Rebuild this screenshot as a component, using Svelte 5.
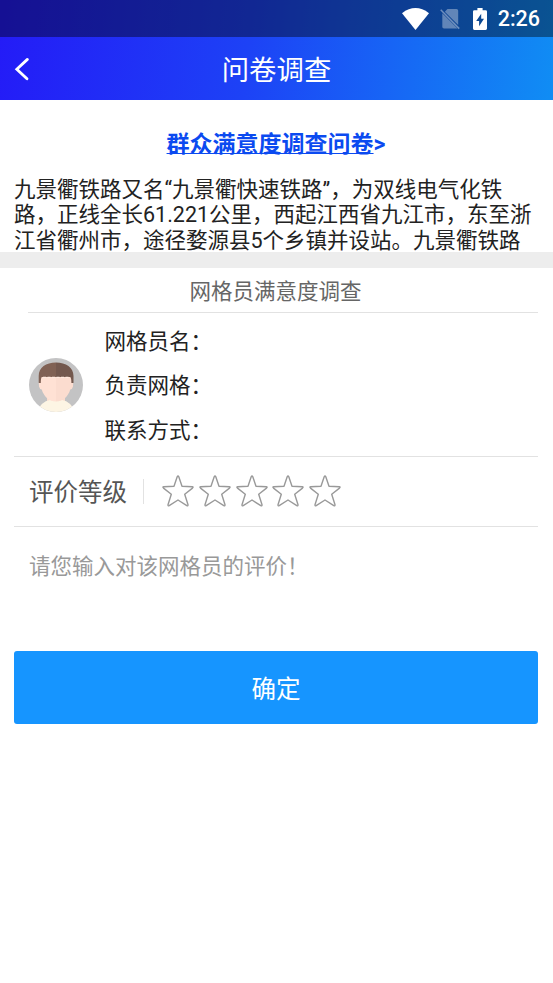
<script lang="ts">
  const fields = ["网格员名：", "负责网格：", "联系方式："];
  const stars = [1, 2, 3, 4, 5];

  let rating = $state(0);
  let comment = $state("");
</script>

<div class="screen" lang="zh-CN">
  <header class="top">
    <div class="status">
      <svg class="wifi" width="27" height="22" viewBox="0 0 27 22">
        <path d="M0 5.2Q13.5-5 27 5.2L13.5 22Z" fill="#fff" />
      </svg>
      <svg class="sim" width="20" height="22" viewBox="0 0 20 22">
        <g fill="#fff" opacity="0.35">
          <path d="M7.5 1H16.5Q18.2 1 18.2 2.7V17L4.8 3.8Z" />
          <path d="M2.3 5.3L17.5 20.5H4Q2.3 20.5 2.3 18.8Z" />
        </g>
        <path d="M.7 1.8L19.2 20.6" stroke="#fff" stroke-width="1.5" opacity="0.4" />
      </svg>
      <svg class="battery" width="14" height="22" viewBox="0 0 14 23" preserveAspectRatio="none">
        <path
          fill="#fff"
          fill-rule="evenodd"
          d="M4.4 0H9.6V2.3H12.6Q14 2.3 14 3.7V21.5Q14 23 12.6 23H1.4Q0 23 0 21.5V3.7Q0 2.3 1.4 2.3H4.4ZM8.2 6L3.2 13.6H6.1V19L11 11.3H8.2Z"
        />
      </svg>
      <span class="clock">2:26</span>
    </div>
    <div class="navbar">
      <button class="back" type="button" aria-label="返回">
        <svg width="16" height="24" viewBox="0 0 16 24">
          <path d="M13.4 2.4L2.8 12.2L13 21.8" fill="none" stroke="#fff" stroke-width="2.8" stroke-linecap="round" />
        </svg>
      </button>
      <h1>问卷调查</h1>
    </div>
  </header>

  <section class="intro">
    <a class="survey-link" href="#survey"><span>群众满意度调查问卷</span>&gt;</a>
    <p>
      九景衢铁路又名“九景衢快速铁路”，为双线电气化铁路，正线全长61.221公里，西起江西省九江市，东至浙江省衢州市，途径婺源县5个乡镇并设站。九景衢铁路
    </p>
  </section>

  <section class="survey">
    <h2>网格员满意度调查</h2>

    <div class="member">
      <svg class="avatar" width="54" height="54" viewBox="0 0 54 54">
        <clipPath id="avatar-clip"><circle cx="27" cy="27" r="27" /></clipPath>
        <g clip-path="url(#avatar-clip)">
          <rect width="54" height="54" fill="#c3c3c4" />
          <path d="M18 34H36V46H18Z" fill="#fbdccd" />
          <path d="M8 54Q12 43.500 21 42Q27 44 33 42Q42 43.500 46 54Z" fill="#fdf5e4" />
          <path d="M11 17H27V43.500C20 43.500 14.500 38 12.800 31.500Q10.500 31 10 28.500L9.800 24.500Z" fill="#ffe1d4" />
          <path d="M43 17H27V43.500C34 43.500 39.500 38 41.200 31.500Q43.500 31 44 28.500L44.200 24.500Z" fill="#fbdccf" />
          <path d="M9.700 25V18C9.700 9.500 17 4.500 27 4.500V19H12.800Q11.800 20 11.800 25Z" fill="#806154" />
          <path d="M27 4.500C37 4.500 44.500 9.500 44.500 18V25H42.400Q42.400 20 41.200 19H27Z" fill="#73584e" />
          <path d="M14 19.300H40.500" stroke="#ffe9df" stroke-width="1.300" stroke-dasharray="3 1.500" />
        </g>
      </svg>
      <ul>
        {#each fields as field}
          <li>{field}</li>
        {/each}
      </ul>
    </div>

    <div class="rating">
      <span class="rating-label">评价等级</span>
      <div class="stars">
        {#each stars as value}
          <button
            class="star"
            class:selected={value <= rating}
            type="button"
            aria-label={`${value}星`}
            onclick={() => (rating = value)}
          >
            <svg width="32" height="32" viewBox="0 0 32 32">
              <path
                d="M15.200 1.800Q16 .3 16.800 1.800L20 11.200L30.300 11.800Q31.700 12 30.500 13.100L22.700 19.300L26 29.700Q26.200 31.400 24.800 30.700L16 25L7.200 30.700Q5.800 31.400 6 29.700L9.300 19.300L1.500 13.100Q.3 12 1.700 11.800L12 11.200Z"
              />
            </svg>
          </button>
        {/each}
      </div>
    </div>

    <textarea bind:value={comment} placeholder="请您输入对该网格员的评价！"></textarea>
    <button class="submit" type="button">确定</button>
  </section>
</div>

<style>
  :global(body) {
    background: #fff;
  }

  .screen {
    min-height: 983px;
    font-family: Roboto, "Noto Sans CJK SC", sans-serif;
    font-size: 21.5px;
    color: #222;
    background: #fff;
  }

  h1,
  h2,
  p,
  ul {
    margin: 0;
    padding: 0;
    font-weight: 400;
  }

  button {
    padding: 0;
    border: none;
    background: none;
    font: inherit;
    cursor: pointer;
  }

  svg {
    display: block;
  }

  .top {
    height: 100px;
    color: #fff;
    background: linear-gradient(97deg, #241bf7, #1d42f6 45%, #108df4);
  }

  .status {
    display: flex;
    align-items: center;
    justify-content: flex-end;
    box-sizing: border-box;
    height: 37px;
    padding-right: 13px;
    background: rgba(0, 0, 0, 0.4);
  }

  .sim {
    margin-left: 11px;
  }

  .battery {
    margin-left: 13px;
  }

  .clock {
    margin-left: 11px;
    font-size: 21.5px;
    font-weight: 500;
    line-height: 39px;
  }

  .navbar {
    display: grid;
    grid-template-columns: 60px 1fr 60px;
    align-items: center;
    height: 63px;
  }

  .back {
    padding-left: 14px;
  }

  h1 {
    padding-top: 5px;
    font-size: 27.4px;
    line-height: 58px;
    text-align: center;
  }

  .intro {
    box-sizing: border-box;
    height: 168px;
    padding: 27px 15px 0 14px;
    border-bottom: 16px solid #ededed;
  }

  .survey-link {
    display: block;
    font-size: 23px;
    font-weight: 700;
    line-height: 36px;
    color: #0b4af0;
    text-align: center;
    text-decoration: none;
  }

  .survey-link span {
    text-decoration: underline;
    text-decoration-thickness: 1px;
    text-underline-offset: 1px;
  }

  .intro p {
    height: 75px;
    margin-top: 14px;
    line-height: 25.3px;
    overflow: hidden;
  }

  .survey {
    padding: 0 15px 0 14px;
  }

  h2 {
    margin-left: 14px;
    padding: 3px 15px 0 0;
    border-bottom: 1px solid #e2e2e2;
    font-size: 21.5px;
    line-height: 41px;
    color: #666;
    text-align: center;
  }

  .member {
    display: flex;
    align-items: center;
    box-sizing: border-box;
    height: 144px;
    padding-left: 15px;
    border-bottom: 1px solid #e2e2e2;
  }

  ul {
    margin-left: 21.5px;
    padding-top: 4px;
    list-style: none;
  }

  li {
    line-height: 44.6px;
  }

  .rating {
    display: flex;
    align-items: center;
    box-sizing: border-box;
    height: 70px;
    padding-left: 15px;
    border-bottom: 1px solid #e2e2e2;
  }

  .rating-label {
    padding: 2px 16px 0 0;
    border-right: 1px solid #e2e2e2;
    font-size: 24.5px;
    line-height: 23px;
    color: #555;
  }

  .stars {
    display: flex;
    gap: 4.8px;
    margin: 0 0 2px 18px;
  }

  .star path {
    fill: none;
    stroke: #999;
    stroke-width: 1.4;
    stroke-linejoin: round;
  }

  .star.selected path {
    fill: #ffb400;
    stroke: #ffb400;
  }

  textarea {
    display: block;
    box-sizing: border-box;
    width: 100%;
    height: 124px;
    padding: 24px 15px;
    border: none;
    outline: none;
    background: none;
    font: inherit;
    line-height: 32px;
    resize: none;
  }

  textarea::placeholder {
    color: #999;
  }

  .submit {
    width: 100%;
    height: 73px;
    border-radius: 3px;
    background: #1695ff;
    color: #fff;
    font-size: 24.5px;
  }
</style>
